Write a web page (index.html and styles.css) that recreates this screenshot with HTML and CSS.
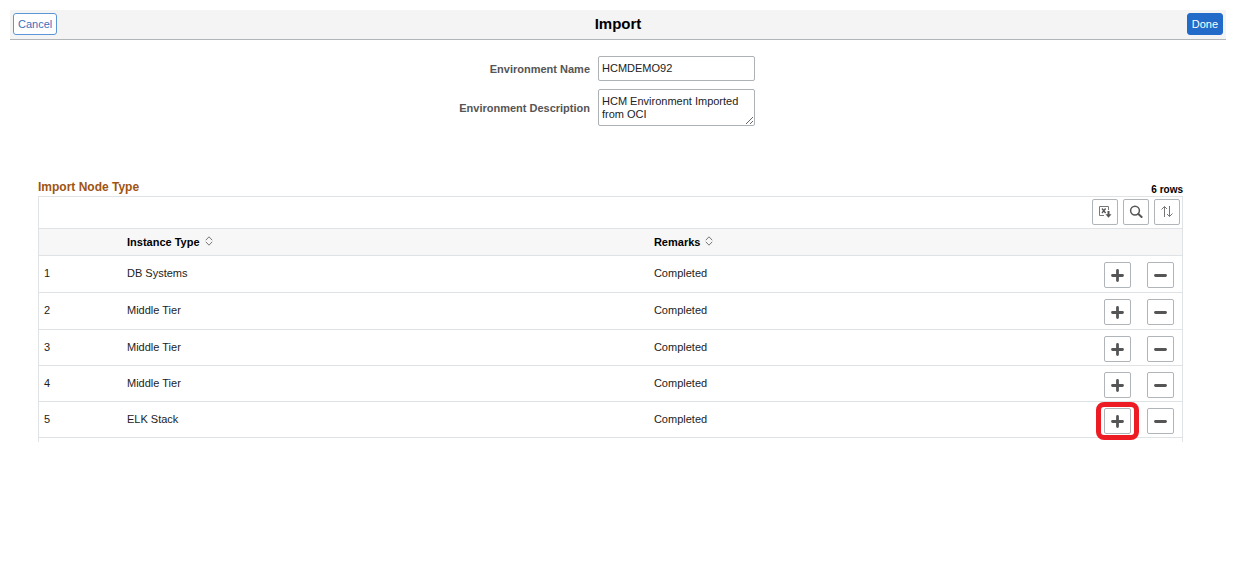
FILE: index.html
```
<!DOCTYPE html>
<html lang="en">
<head>
<meta charset="utf-8">
<title>Import</title>
<link rel="stylesheet" href="styles.css">
</head>
<body>
<svg class="sprite" aria-hidden="true">
  <symbol id="plus" viewBox="0 0 13 13"><path d="M6.5 1.5V11.5M1.5 6.5H11.5" stroke="#555" stroke-width="2.8" stroke-linecap="round" fill="none"/></symbol>
  <symbol id="minus" viewBox="0 0 13 13"><path d="M1.5 6.5H11.5" stroke="#555" stroke-width="2.8" stroke-linecap="round" fill="none"/></symbol>
  <symbol id="sort" viewBox="0 0 8 10"><path d="M0.8 4.2L4 0.8L7.2 4.2M0.8 5.8L4 9.2L7.2 5.8" stroke="#777" stroke-width="1" fill="none"/></symbol>
</svg>
<header class="banner">
  <button class="btn" type="button">Cancel</button>
  <h1 class="title">Import</h1>
  <button class="btn btn-primary" type="button">Done</button>
</header>
<main>
  <form class="fields">
    <label for="env-name">Environment Name</label>
    <input class="control" id="env-name" type="text" value="HCMDEMO92">
    <label for="env-desc">Environment Description</label>
    <textarea class="control" id="env-desc" rows="2">HCM Environment Imported from OCI</textarea>
  </form>
  <section class="nodes">
    <div class="nodes-head">
      <h2 class="nodes-title">Import Node Type</h2>
      <span class="count">6 rows</span>
    </div>
    <div class="grid">
      <div class="toolbar">
        <button class="icon-btn" type="button" aria-label="Export to Excel">
          <svg width="14" height="14" viewBox="0 0 14 14" fill="none"><path d="M10.5 5V1.5H1.5V10.5H6" stroke="#777"/><path d="M4 3.5L7.6 8M7.6 3.5L4 8" stroke="#555" stroke-width="1.3"/><path d="M10.5 6V10" stroke="#555" stroke-width="2"/><path d="M7.5 9.3H13.5L10.5 12.8Z" fill="#555"/></svg>
        </button>
        <button class="icon-btn" type="button" aria-label="Find">
          <svg width="14" height="14" viewBox="0 0 14 14" fill="none" stroke="#555"><circle cx="6" cy="5.6" r="4.4" stroke-width="1.5"/><path d="M9.4 9L12.6 12" stroke-width="2" stroke-linecap="round"/></svg>
        </button>
        <button class="icon-btn" type="button" aria-label="Sort">
          <svg width="14" height="14" viewBox="0 0 14 14" fill="none" stroke="#777"><path d="M4.5 12V1.5M1.5 4.5L4.5 1.5L7 4M9.5 1V11.5M7 9L9.5 11.5L12.5 8.5"/></svg>
        </button>
      </div>
      <table class="table">
        <thead>
          <tr>
            <th class="col-num"></th>
            <th class="col-type" scope="col">Instance Type<svg class="sort" width="8" height="10"><use href="#sort"/></svg></th>
            <th scope="col">Remarks<svg class="sort" width="8" height="10"><use href="#sort"/></svg></th>
            <th class="col-actions"></th>
          </tr>
        </thead>
        <tbody>
          <tr><td>1</td><td>DB Systems</td><td>Completed</td><td><div class="actions"><button class="icon-btn" type="button" aria-label="Add row"><svg width="13" height="13"><use href="#plus"/></svg></button><button class="icon-btn" type="button" aria-label="Delete row"><svg width="13" height="13"><use href="#minus"/></svg></button></div></td></tr>
          <tr><td>2</td><td>Middle Tier</td><td>Completed</td><td><div class="actions"><button class="icon-btn" type="button" aria-label="Add row"><svg width="13" height="13"><use href="#plus"/></svg></button><button class="icon-btn" type="button" aria-label="Delete row"><svg width="13" height="13"><use href="#minus"/></svg></button></div></td></tr>
          <tr><td>3</td><td>Middle Tier</td><td>Completed</td><td><div class="actions"><button class="icon-btn" type="button" aria-label="Add row"><svg width="13" height="13"><use href="#plus"/></svg></button><button class="icon-btn" type="button" aria-label="Delete row"><svg width="13" height="13"><use href="#minus"/></svg></button></div></td></tr>
          <tr><td>4</td><td>Middle Tier</td><td>Completed</td><td><div class="actions"><button class="icon-btn" type="button" aria-label="Add row"><svg width="13" height="13"><use href="#plus"/></svg></button><button class="icon-btn" type="button" aria-label="Delete row"><svg width="13" height="13"><use href="#minus"/></svg></button></div></td></tr>
          <tr><td>5</td><td>ELK Stack</td><td>Completed</td><td><div class="actions"><button class="icon-btn marked" type="button" aria-label="Add row"><svg width="13" height="13"><use href="#plus"/></svg></button><button class="icon-btn" type="button" aria-label="Delete row"><svg width="13" height="13"><use href="#minus"/></svg></button></div></td></tr>
        </tbody>
      </table>
    </div>
  </section>
</main>
</body>
</html>
```
FILE: styles.css
```
* { box-sizing: border-box; }
body {
  margin: 10px 20px 0 10px;
  background: #fff;
  color: #222;
  font: 11px/14px "Liberation Sans", Arial, sans-serif;
}
.sprite { display: none; }
.banner {
  display: grid;
  grid-template-columns: 1fr auto 1fr;
  align-items: center;
  padding: 3px 3px 4px;
  background: #f4f4f4;
  border-bottom: 1px solid #b2b5b7;
}
.title { margin: 0; color: #000; font-size: 15px; line-height: 20px; }
.btn {
  justify-self: start;
  height: 22px;
  padding: 0 4px;
  border: 1px solid #5b97d6;
  border-radius: 3px;
  background: #fff;
  color: #3a70bd;
  font: inherit;
}
.btn-primary {
  justify-self: end;
  border-color: #226bc8;
  background: #226bc8;
  color: #fff;
}
.fields {
  display: grid;
  grid-template-columns: 580fr 628fr;
  gap: 8px;
  align-items: center;
  padding-top: 16px;
}
.fields label { text-align: right; color: #555; font-weight: bold; }
.control {
  width: 157px;
  height: 25px;
  margin: 0;
  padding: 0 3px 1px;
  border: 1px solid #adb2b6;
  border-radius: 2px;
  background: #fff;
  color: #222;
  font: inherit;
}
textarea.control { height: 37px; padding: 5px 3px; line-height: 13px; overflow: hidden; }
.nodes { margin: 54px 43px 0 28px; }
.nodes-head { display: flex; justify-content: space-between; align-items: flex-end; }
.nodes-title { margin: 0; padding-bottom: 2px; color: #9e5413; font-size: 12px; line-height: 14px; }
.count { color: #000; font-size: 10px; line-height: 13px; font-weight: bold; }
.grid { padding-bottom: 4px; border: 1px solid #dfe3e6; border-bottom: 0; }
.toolbar { display: flex; justify-content: flex-end; gap: 5px; padding: 2px 2px 3px; }
.icon-btn {
  position: relative;
  display: flex;
  align-items: center;
  justify-content: center;
  width: 26px;
  height: 26px;
  padding: 0;
  border: 1px solid #b0b5ba;
  border-radius: 2px;
  background: #fff;
}
.icon-btn svg { display: block; }
.table { width: 100%; border-collapse: separate; border-spacing: 0; table-layout: fixed; }
.table th {
  height: 28px;
  padding: 0;
  border-top: 1px solid #dfe3e6;
  border-bottom: 1px solid #dfe3e6;
  background: #f7f7f7;
  color: #000;
  text-align: left;
}
.table td { height: 36px; padding: 10px 0 0; border-bottom: 1px solid #dfe3e6; vertical-align: top; }
.table tbody tr:nth-child(-n+2) td { height: 37px; }
.table td:first-child { padding-left: 5px; }
.table td:last-child { padding-top: 6px; }
.col-num { width: 88px; }
.col-type { width: 46.1%; }
.col-actions { width: 78px; }
.sort { margin-left: 5px; }
.actions { display: flex; gap: 16px; }
.actions .icon-btn { width: 27px; }
.marked::after {
  content: "";
  position: absolute;
  inset: -7px -9px;
  border: 5px solid #ed1c24;
  border-radius: 8px;
}
```
